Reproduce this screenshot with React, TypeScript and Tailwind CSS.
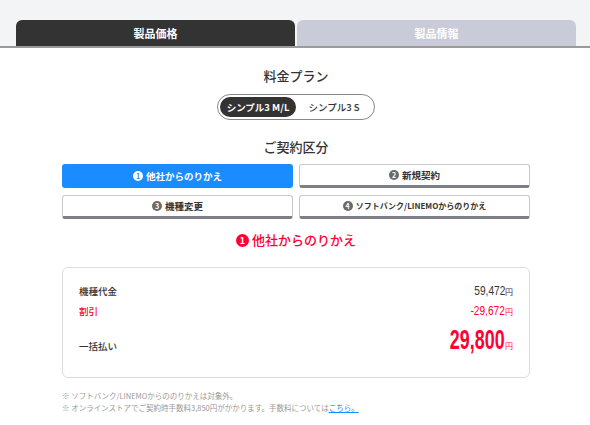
const jp = "font-['Noto_Sans_CJK_JP','Noto_Sans',sans-serif]";
const num = "inline-block origin-right font-['Liberation_Sans',sans-serif]";

function Badge({ n, tone }: { n: number; tone: "white" | "gray" | "red" }) {
  const cls = {
    white: "bg-white text-[#1a8cff]",
    gray: "bg-[#6b6b6b] text-white",
    red: "bg-[#ff0033] text-white",
  }[tone];
  const size = tone === "red" ? "w-[13px] h-[13px] text-[9px]" : "w-[10px] h-[10px] text-[7px]";
  return (
    <span className={`inline-flex items-center justify-center rounded-full font-bold leading-none ${size} ${cls}`}>
      {n}
    </span>
  );
}

function TypeButton({ n, label, active, small }: { n: number; label: string; active?: boolean; small?: boolean }) {
  return (
    <button
      className={`flex h-[24px] items-center justify-center gap-[3px] rounded-[3px] font-bold ${
        active
          ? "bg-[#1a8cff] text-white"
          : "border border-[#c8c8c8] border-b-[3px] border-b-[#7d7f86] bg-white text-[#333]"
      } ${small ? "text-[8px]" : "text-[9.5px]"}`}
    >
      <Badge n={n} tone={active ? "white" : "gray"} />
      {label}
    </button>
  );
}

function Yen({ value, big }: { value: string; big?: boolean }) {
  return (
    <span className="flex items-baseline">
      <span
        className={`${num} ${
          big ? "text-[28px] font-bold leading-none scale-x-[0.64]" : "text-[13.5px] leading-none scale-x-[0.75]"
        }`}
      >
        {value}
      </span>
      <span className="text-[8px] leading-none">円</span>
    </span>
  );
}

export default function App() {
  return (
    <div className={`${jp} w-[590px] h-[425px] bg-white text-[#333] overflow-hidden`}>
      {/* tabs */}
      <div className="bg-[#f3f4f6] pt-[20px] pl-[16px] pr-[14px] flex gap-[2px] border-b-2 border-[#9a9a9a]">
        <div className="flex-1 h-[26px] rounded-t-[6px] bg-[#333] text-white text-[11px] font-bold flex items-center justify-center">
          製品価格
        </div>
        <div className="flex-1 h-[26px] rounded-t-[6px] bg-[#c9ccd8] text-white text-[11px] font-bold flex items-center justify-center">
          製品情報
        </div>
      </div>

      <div className="pl-[62px] pr-[60px]">
        <h2 className="mt-[19px] text-center text-[13px] font-medium leading-[18px]">料金プラン</h2>
        <div className="mt-[9px] flex justify-center">
          <div className="flex items-center h-[26px] w-[158px] rounded-full border border-[#888] px-[2px]">
            <span className="h-[20px] w-[76px] rounded-full bg-[#333] text-white text-[9.5px] font-bold flex items-center justify-center">
              シンプル3 M/L
            </span>
            <span className="flex-1 text-center text-[9.5px] font-medium">シンプル3 S</span>
          </div>
        </div>

        <h2 className="mt-[18px] text-center text-[13px] font-medium leading-[18px]">ご契約区分</h2>
        <div className="mt-[8px] grid grid-cols-2 gap-x-[6px] gap-y-[7px]">
          <TypeButton n={1} label="他社からのりかえ" active />
          <TypeButton n={2} label="新規契約" />
          <TypeButton n={3} label="機種変更" />
          <TypeButton n={4} label="ソフトバンク/LINEMOからのりかえ" small />
        </div>

        <div className="mt-[12px] flex items-center justify-center gap-[3px] text-[#ff0033] text-[13px] font-medium leading-[18px]">
          <Badge n={1} tone="red" />
          他社からのりかえ
        </div>

        <div className="mt-[18px] h-[111px] rounded-[6px] border border-[#dcdcdc] px-[16px] pt-[14px]">
          <div className="flex items-center justify-between h-[18px]">
            <span className="text-[9.5px] font-medium">機種代金</span>
            <Yen value="59,472" />
          </div>
          <div className="mt-[2px] flex items-center justify-between h-[18px] text-[#ff0033]">
            <span className="text-[9.5px] font-medium">割引</span>
            <Yen value="-29,672" />
          </div>
          <div className="mt-[6px] flex items-end justify-between h-[28px] text-[#ff0033]">
            <span className="text-[9.5px] font-medium mb-[1px] text-[#333]">一括払い</span>
            <Yen value="29,800" big />
          </div>
        </div>

        <div className="mt-[12px] text-[7.5px] text-[#999] leading-[12px]">
          <p>※ ソフトバンク/LINEMOからののりかえは対象外。</p>
          <p>
            ※ オンラインストアでご契約時手数料3,850円がかかります。手数料については
            <span className="text-[#1a8cff] underline">こちら。</span>
          </p>
        </div>
      </div>
    </div>
  );
}
